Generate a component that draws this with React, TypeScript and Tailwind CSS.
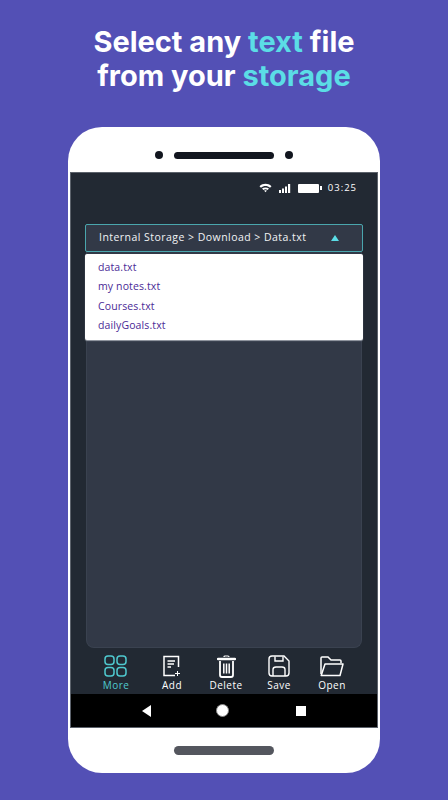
import React from "react";

const files = ["data.txt", "my notes.txt", "Courses.txt", "dailyGoals.txt"];

const StatusIcons = () => (
  <div className="flex items-center justify-end h-[30px] shrink-0 pr-[20px] text-white text-[9.5px] font-medium tracking-[1px]">
    {/* wifi */}
    <svg width="13" height="10" viewBox="0 0 13 10" className="mr-[7px]">
      <path d="M0.5 3.2 C4 0 9 0 12.5 3.2 L11 4.8 C8.3 2.5 4.7 2.5 2 4.8 Z" fill="white" />
      <path d="M3 5.6 C5 4 8 4 10 5.6 L8.6 7 C7.4 6.1 5.6 6.1 4.4 7 Z" fill="white" />
      <path d="M5.2 7.8 C6 7.2 7 7.2 7.8 7.8 L6.5 9.2 Z" fill="white" />
    </svg>
    {/* signal */}
    <svg width="12" height="9" viewBox="0 0 12 9" className="mr-[7px]">
      <rect x="0" y="6" width="2" height="3" fill="#fff" />
      <rect x="3" y="4.5" width="2" height="4.5" fill="#fff" />
      <rect x="6" y="2.5" width="2" height="6.5" fill="#fff" />
      <rect x="9" y="0" width="2.2" height="9" fill="#fff" />
    </svg>
    {/* battery */}
    <div className="w-[21px] h-[9px] bg-white rounded-[1px]"></div>
    <div className="w-[2px] h-[4px] bg-white mr-[6px] ml-[1px]"></div>
    <span>03:25</span>
  </div>
);

const BottomItem = ({
  label,
  active,
  className,
  children,
}: {
  label: string;
  active?: boolean;
  className?: string;
  children: React.ReactNode;
}) => (
  <div className={`flex flex-col items-center w-[53px] ${active ? "text-[#4fc9cf]" : "text-white"} ${className ?? ""}`}>
    <div className="h-[24px] flex items-center justify-center">{children}</div>
    <span className="text-[10px] leading-[12px] mt-[1px] tracking-[0.5px] font-medium">{label}</span>
  </div>
);

const App = () => {
  return (
    <div className="w-[448px] h-[800px] overflow-hidden bg-[#5350b5] flex flex-col items-center font-['Open_Sans',sans-serif]">
      {/* headline */}
      <h1 className="mt-[25px] text-center text-white text-[29px] leading-[34px] font-bold font-['Inter',sans-serif]">
        Select any <span className="text-[#5bdde6]">text</span> file
        <br />
        from your <span className="text-[#5bdde6]">storage</span>
      </h1>

      {/* phone */}
      <div className="mt-[34px] w-[312px] h-[646px] bg-white rounded-[34px] px-[3px] flex flex-col shrink-0">
        {/* speaker */}
        <div className="h-[46px] pt-[10px] flex items-center justify-center gap-[11px] shrink-0">
          <div className="w-[8px] h-[8px] rounded-full bg-[#12161f]"></div>
          <div className="w-[100px] h-[7px] rounded-full bg-[#12161f]"></div>
          <div className="w-[8px] h-[8px] rounded-full bg-[#12161f]"></div>
        </div>

        {/* screen */}
        <div className="h-[554px] shrink-0 bg-[#222933] flex flex-col shadow-[0_0_0_1px_#5c626b]">
          <StatusIcons />

          <div className="relative mt-[21px] mx-[14px] shrink-0">
            {/* dropdown header */}
            <div className="h-[28px] bg-[#323947] border border-[#4aa6ad] rounded-[2px] flex items-center justify-between pl-[13px] pr-[23px] text-[#f1f3f5] text-[10.5px] font-medium tracking-[0.46px]">
              <span>Internal Storage &gt; Download &gt; Data.txt</span>
              <svg width="8" height="6" viewBox="0 0 8 6">
                <path d="M4 0 L8 6 L0 6 Z" fill="#5bdde6" />
              </svg>
            </div>

            {/* dropdown menu */}
            <div className="absolute top-[30px] left-0 right-0 h-[86px] z-10 bg-white rounded-[2px] pt-[4px] pl-[13px] shadow-[0_1px_1px_#9a9fa8]">
              {files.map((f) => (
                <div key={f} className="h-[19.5px] flex items-center text-[#4a2a96] text-[10.5px] tracking-[0.12px]">
                  {f}
                </div>
              ))}
            </div>

            {/* editor panel */}
            <div className="mx-[1px] h-[396px] bg-[#323947] border border-[#3a4250] border-t-0 rounded-b-[8px]"></div>
          </div>

          {/* bottom toolbar */}
          <div className="h-[40px] mt-[6px] shrink-0 flex pl-[18.5px] items-start">
            <BottomItem label="More" active>
              <svg width="24" height="22" viewBox="0 0 24 22" fill="none" stroke="#4fc9cf" strokeWidth="1.5">
                <rect x="1" y="1" width="9" height="8.5" rx="3" />
                <rect x="13" y="1" width="9" height="8.5" rx="3" />
                <rect x="1" y="12.5" width="9" height="8.5" rx="3" />
                <rect x="13" y="12.5" width="9" height="8.5" rx="3" />
              </svg>
            </BottomItem>
            <BottomItem label="Add" className="ml-[3px]">
              <svg width="18" height="22" viewBox="0 0 18 22" fill="none" stroke="white" strokeWidth="1.5">
                <path d="M15.5 12 V1.5 H1 V20.5 H12" />
                <path d="M4.5 6 H12 M4.5 9 H11 M4.5 12 H8" strokeWidth="1.3" />
                <path d="M14.5 16 V21 M12 18.5 H17" strokeWidth="1" />
              </svg>
            </BottomItem>
            <BottomItem label="Delete" className="ml-[1px]">
              <svg width="19" height="23" viewBox="0 0 19 23" fill="none" stroke="white">
                <path d="M7 2 Q7 1 8 1 H11 Q12 1 12 2" strokeWidth="1.2" />
                <path d="M1 4 H18" strokeWidth="2.4" strokeLinecap="round" />
                <path d="M3 6 V20 Q3 22 5 22 H14 Q16 22 16 20 V6" strokeWidth="1.8" />
                <path d="M6.8 8.5 V18.5 M9.5 8.5 V18.5 M12.2 8.5 V18.5" strokeWidth="1.5" />
              </svg>
            </BottomItem>
            <BottomItem label="Save">
              <svg width="22" height="22" viewBox="0 0 22 22" fill="none" stroke="white" strokeWidth="1.4">
                <path d="M4 1 H16 L21 6 V18 Q21 21 18 21 H4 Q1 21 1 18 V4 Q1 1 4 1 Z" />
                <path d="M7 1.5 V6 H15 V1.5" />
                <path d="M5 21 V14.5 Q5 12 8 12 H14 Q17 12 17 14.5 V21" />
              </svg>
            </BottomItem>
            <BottomItem label="Open">
              <svg width="24" height="21" viewBox="0 0 24 21" fill="none" stroke="white" strokeWidth="1.5">
                <path d="M1 18 V2 Q1 1 2 1 H8 L11 4 H20 Q21 4 21 5 V7" />
                <path d="M1.2 19.5 H20 L23 8 H5 L1.2 19.5 Z" strokeLinejoin="round" />
              </svg>
            </BottomItem>
          </div>

          {/* nav bar */}
          <div className="h-[33px] shrink-0 bg-black flex items-center pl-[71px]">
            <svg width="9" height="12" viewBox="0 0 9 12">
              <path d="M9 0 V12 L0 6 Z" fill="white" />
            </svg>
            <div className="ml-[65px] w-[13px] h-[13px] rounded-full bg-white border border-[#888]"></div>
            <div className="ml-[67px] w-[10px] h-[10px] bg-white"></div>
          </div>
        </div>

        {/* home pill */}
        <div className="flex-1 flex items-center justify-center">
          <div className="w-[100px] h-[9px] rounded-full bg-[#54565e]"></div>
        </div>
      </div>
    </div>
  );
};

export default App;
